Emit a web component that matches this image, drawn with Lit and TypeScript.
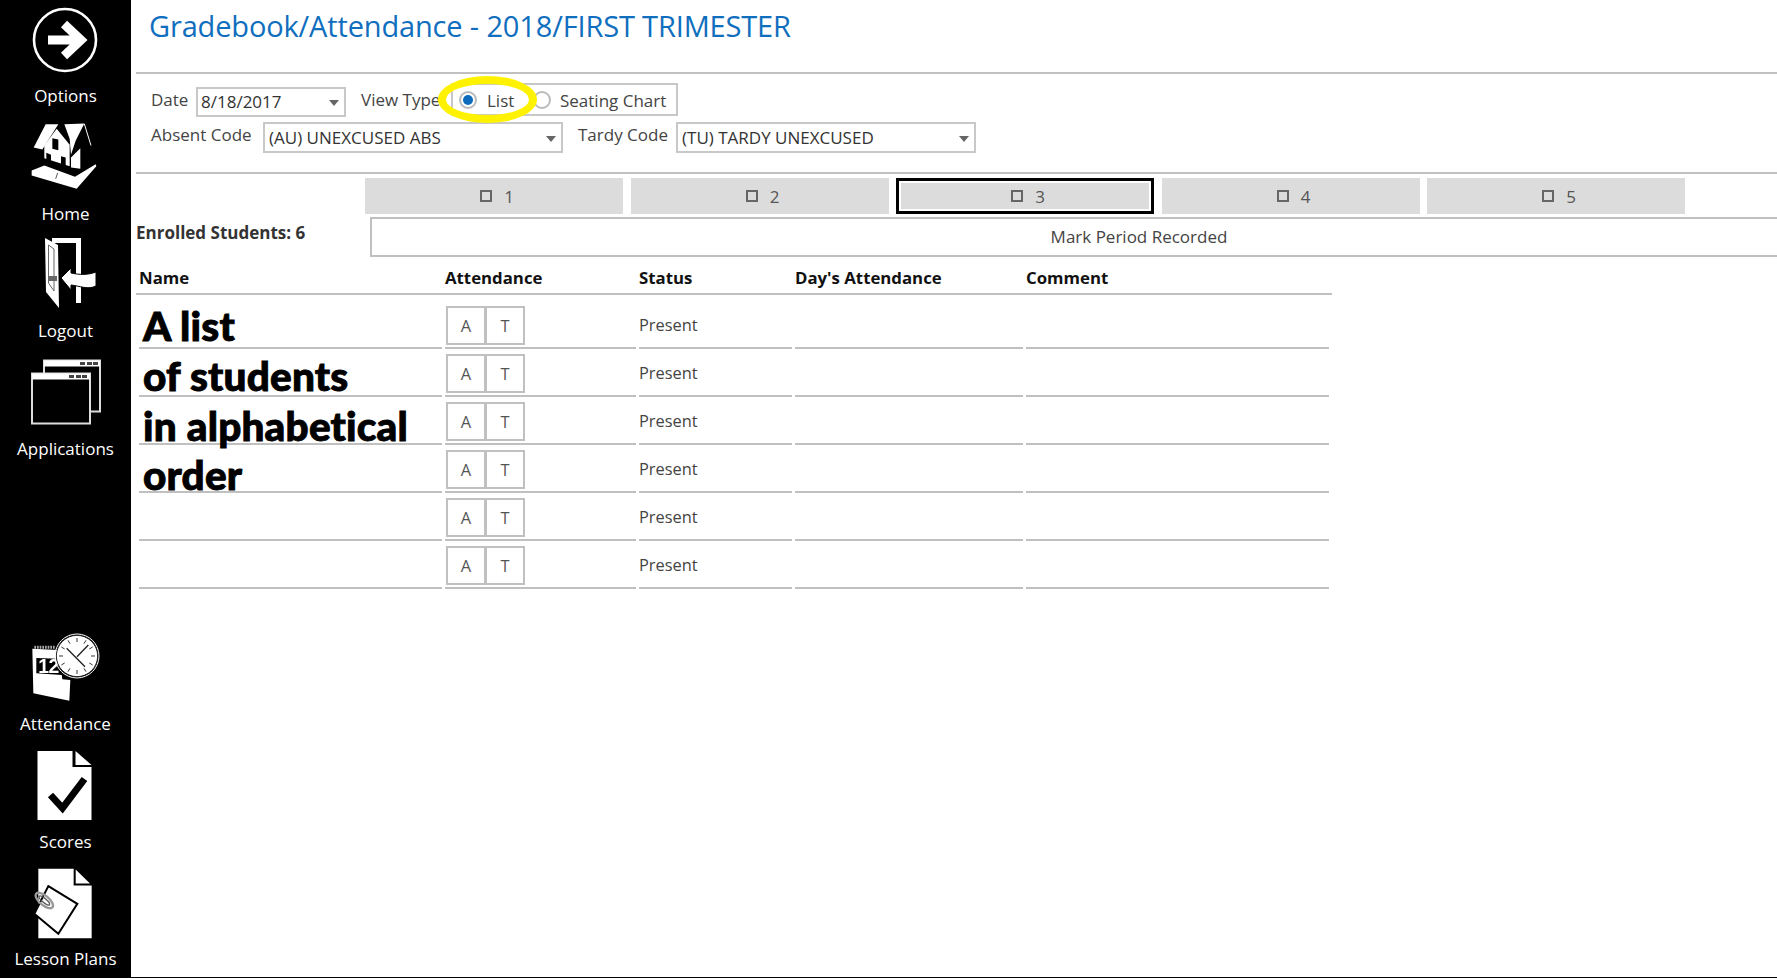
import { LitElement, html, css, svg } from "lit";
import { customElement } from "lit/decorators.js";

const icons: Record<string, unknown> = {
  options: svg`<circle cx="65" cy="40" r="31" fill="none" stroke="#fff" stroke-width="2.6"/>
    <path d="M48 40H81M64 24L81 40L64 56" fill="none" stroke="#fff" stroke-width="9"/>`,
  home: svg`<g transform="translate(25,-2.5) scale(.3333)" fill="#fff">
    <polygon points="62,26 100,26 52,102 26,96"/>
    <polygon points="95,40 134,88 134,152 58,128 58,90"/>
    <polygon points="82,68 100,72 100,104 82,100" fill="#000"/>
    <polygon points="64,112 78,118 78,145 64,140" fill="#000"/>
    <polygon points="108,122 122,126 122,150 108,146" fill="#000"/>
    <polygon points="118,26 178,24 152,76 138,118 134,70"/>
    <path d="M178 25L198 90" stroke="#fff" stroke-width="3"/>
    <polygon points="138,126 166,98 166,160 138,156"/>
    <polygon points="20,165 58,150 150,184 212,146 214,152 155,220 20,180"/>
    <path d="M98 172L92 190" stroke="#000" stroke-width="2"/></g>`,
  logout: svg`<g fill="#fff">
    <path d="M47 3H81V68H76V8H52V3Z"/>
    <polygon points="45,3 58,10 59,73 46,57"/>
    <polygon points="48.5,10 54,14 54,56 48.5,48" fill="none" stroke="#666" stroke-width="1"/>
    <rect x="49" y="41" width="8" height="5" fill="#666"/>
    <path d="M61 43L71 33V38C80 40 88 40 96 37V51C88 55 80 51 71 50V55Z" stroke="#000" stroke-width="1"/></g>`,
  apps: svg`<g>
    <rect x="44" y="7.5" width="56" height="51" fill="none" stroke="#ddd" stroke-width="2"/>
    <rect x="44" y="7.5" width="56" height="6" fill="#fff"/>
    <rect x="32" y="20.5" width="58" height="50" fill="#000" stroke="#ddd" stroke-width="2"/>
    <rect x="32" y="20.5" width="58" height="6" fill="#fff"/>
    <path d="M80 10.5h5M87 10.5h5M93 10.5h5M69 23.5h5M76 23.5h5M82 23.5h5" stroke="#444" stroke-width="3"/></g>`,
  attendance: svg`<g transform="translate(25,2) scale(.3333)">
    <polygon points="22,56 100,60 112,148 136,150 133,212 25,190" fill="#fff"/>
    <path d="M28 52H92" stroke="#aaa" stroke-width="9" stroke-dasharray="5 3"/>
    <polygon points="34,84 100,86 122,136 34,130" fill="#000"/>
    <text x="40" y="128" font-family="Liberation Sans, sans-serif" font-weight="700" font-size="58" fill="#fff" letter-spacing="-2">12</text>
    <circle cx="156" cy="78" r="62" fill="#fff" stroke="#222" stroke-width="3"/>
    <circle cx="156" cy="78" r="66" fill="none" stroke="#fff" stroke-width="3"/>
    <path d="M156 24v12M156 120v12M102 78h12M198 78h12M129 31l6 10M183 125l-6-10M109 51l10 6M203 105l-10-6M183 31l-6 10M129 125l6-10M203 51l-10 6M109 105l10-6" stroke="#333" stroke-width="3"/>
    <path d="M125 55L180 110M156 80L190 45" stroke="#222" stroke-width="4"/></g>`,
  scores: svg`<g transform="translate(-1.5,5)">
    <polygon points="39,0 74,0 74,16 93,16 93,69 39,69" fill="#fff"/>
    <polygon points="77,0 93,14 77,14" fill="#fff"/>
    <path d="M52 44L64 57L86 28" fill="none" stroke="#000" stroke-width="7"/></g>`,
  lesson: svg`<g transform="translate(25,2.5) scale(.3333)">
    <polygon points="40,10 146,10 146,60 200,60 200,218 40,218" fill="#fff"/>
    <polygon points="152,12 195,54 152,54" fill="#fff"/>
    <polygon points="70,62 157,115 100,205 28,145" fill="#fff" stroke="#000" stroke-width="6"/>
    <ellipse cx="58" cy="105" rx="32" ry="14" transform="rotate(40 58 105)" fill="none" stroke="#999" stroke-width="7"/>
    <ellipse cx="58" cy="105" rx="20" ry="6" transform="rotate(40 58 105)" fill="none" stroke="#555" stroke-width="4"/></g>`,
};

const top = [
  ["options", "Options"],
  ["home", "Home"],
  ["logout", "Logout"],
  ["apps", "Applications"],
];
const bottom = [
  ["attendance", "Attendance"],
  ["scores", "Scores"],
  ["lesson", "Lesson Plans"],
];
const columns = ["Name", "Attendance", "Status", "Day's Attendance", "Comment"];

@customElement("app-root")
export class AppRoot extends LitElement {
  static styles = css`
    :host {
      display: flex;
      width: 1777px;
      height: 978px;
      overflow: hidden;
      box-sizing: border-box;
      border-bottom: 1px solid #000;
      font-family: "Open Sans", "Noto Sans", sans-serif;
      font-size: 17px;
      color: #444;
      background: #fff;
    }
    .side {
      width: 131px;
      flex: none;
      background: #000;
      color: #fff;
      display: flex;
      flex-direction: column;
      overflow: hidden;
    }
    .bottom-group { margin-top: 158px; }
    .item { height: 117.5px; display: flex; flex-direction: column; align-items: center; }
    .item svg { display: block; width: 131px; height: 84px; flex: none; filter: blur(0.35px); }
    .item span { line-height: 24px; font-size: 17px; white-space: nowrap; }

    .main { flex: 1; min-width: 0; position: relative; overflow: hidden; }
    .title {
      height: 72px;
      padding-left: 18px;
      box-sizing: border-box;
      font-size: 29px;
      line-height: 52px;
      color: #106ebe;
      white-space: nowrap;
      letter-spacing: -0.15px;
    }
    .rule { height: 2px; background: #c0c0c0; margin-left: 5px; }

    .filters { height: 98px; padding: 9px 0 0 20px; box-sizing: border-box; position: relative; }
    .frow { display: flex; align-items: flex-start; }
    .frow.second { margin-top: 5px; }
    .lab { flex: none; white-space: nowrap; line-height: 24px; }
    .l-date { width: 45px; margin-top: 5px; }
    .l-view { width: 90px; margin: 5px 0 0 15px; }
    .l-abs { width: 112px; margin-top: 1px; }
    .l-tardy { width: 98px; margin: 1px 0 0 15px; }
    .box {
      flex: none;
      box-sizing: border-box;
      border: 2px solid #c8c8c8;
      padding-left: 3px;
      display: flex;
      align-items: center;
      justify-content: space-between;
      color: #333;
      white-space: nowrap;
    }
    .box i {
      width: 0; height: 0;
      border: 5px solid transparent;
      border-top: 6px solid #666;
      border-bottom: 0;
      margin: 2px 5px 0 0;
    }
    .b-date { width: 150px; height: 30px; margin-top: 4px; padding-bottom: 1px; }
    .b-sel { width: 300px; height: 31px; padding-left: 4px; }
    .group {
      width: 227px;
      height: 33px;
      box-sizing: border-box;
      border: 2px solid #c8c8c8;
      padding-top: 1px;
      display: flex;
      align-items: center;
      flex: none;
    }
    .radio {
      width: 18px; height: 18px;
      border-radius: 50%;
      box-sizing: border-box;
      border: 2px solid #bbb;
      background: #fff;
      display: grid;
      place-items: center;
      flex: none;
    }
    .radio b { width: 10px; height: 10px; border-radius: 50%; background: #0f6cbd; }
    .r1 { margin-left: 6px; }
    .t1 { margin-left: 10px; width: 46px; }
    .r2 { margin-left: 0; }
    .t2 { margin-left: 9px; white-space: nowrap; }
    .ring {
      position: absolute;
      left: 307px;
      top: 2px;
      width: 99px;
      height: 47px;
      box-sizing: border-box;
      border: 8px solid #fff200;
      border-radius: 50%;
    }

    .tabs { display: flex; gap: 7.5px; margin: 4px 0 0 234px; }
    .tab {
      width: 258px;
      height: 36px;
      box-sizing: border-box;
      padding-left: 6px;
      background: #dcdcdc;
      display: flex;
      align-items: center;
      justify-content: center;
      gap: 12px;
      color: #555;
    }
    .tab.on { border: 3px solid #000; box-shadow: inset 0 0 0 2px #fff; }
    .check { width: 12px; height: 12px; box-sizing: border-box; border: 2px solid #666; }

    .enrolled { display: flex; height: 40px; margin-top: 3px; }
    .count {
      width: 234px;
      margin-left: 5px;
      flex: none;
      font-weight: 700;
      color: #333;
      line-height: 32px;
      white-space: nowrap;
    }
    .mark {
      width: 1538px;
      flex: none;
      box-sizing: border-box;
      border: 2px solid #c0c0c0;
      padding-bottom: 2px;
      display: flex;
      align-items: center;
      justify-content: center;
      color: #444;
    }

    .table { margin-left: 8px; width: 1193px; }
    .grid { display: grid; grid-template-columns: 303px 191px 153px 228px 303px; column-gap: 3px; }
    .head { height: 38px; box-sizing: border-box; padding-top: 9px; border-bottom: 2px solid #c0c0c0; margin: 0 0 6px -3px; padding-left: 3px; width: 1196px; }
    .head div { font-weight: 700; color: #111; line-height: 24px; white-space: nowrap; font-size: 16.8px; }
    .row { height: 48px; }
    .cell { box-sizing: border-box; height: 48px; border-bottom: 2px solid #c0c0c0; display: flex; align-items: center; font-size: 16.4px; }
    .ab { display: flex; align-self: flex-start; margin: 5px 0 0 1px; }
    .ab span {
      width: 40px; height: 39px;
      box-sizing: border-box;
      border: 2px solid #c0c0c0;
      display: grid;
      place-items: center;
      color: #555;
    }
    .ab span + span { margin-left: -1px; }

    .note {
      position: absolute;
      left: 12px;
      top: 301px;
      font-family: Lato, "Open Sans", sans-serif;
      font-weight: 900;
      font-size: 40.5px;
      line-height: 49.8px;
      letter-spacing: 0.2px;
      color: #000;
      white-space: nowrap;
      -webkit-text-stroke: 0.9px #000;
    }
  `;

  private item(i: string[]) {
    return html`<div class="item">
      <svg viewBox="0 0 131 84">${icons[i[0]]}</svg>
      <span>${i[1]}</span>
    </div>`;
  }

  render() {
    return html`
      <nav class="side">
        <div>${top.map((i) => this.item(i))}</div>
        <div class="bottom-group">${bottom.map((i) => this.item(i))}</div>
      </nav>
      <main class="main">
        <div class="title">Gradebook/Attendance - 2018/FIRST TRIMESTER</div>
        <div class="rule"></div>
        <section class="filters">
          <div class="frow">
            <span class="lab l-date">Date</span>
            <div class="box b-date">8/18/2017<i></i></div>
            <span class="lab l-view">View Type</span>
            <div class="group">
              <span class="radio r1"><b></b></span><span class="t1">List</span>
              <span class="radio r2"></span><span class="t2">Seating Chart</span>
            </div>
          </div>
          <div class="frow second">
            <span class="lab l-abs">Absent Code</span>
            <div class="box b-sel">(AU) UNEXCUSED ABS<i></i></div>
            <span class="lab l-tardy">Tardy Code</span>
            <div class="box b-sel">(TU) TARDY UNEXCUSED<i></i></div>
          </div>
          <div class="ring"></div>
        </section>
        <div class="rule"></div>
        <div class="tabs">
          ${[1, 2, 3, 4, 5].map(
            (n) => html`<div class="tab ${n === 3 ? "on" : ""}"><span class="check"></span>${n}</div>`
          )}
        </div>
        <div class="enrolled">
          <div class="count">Enrolled Students: 6</div>
          <div class="mark">Mark Period Recorded</div>
        </div>
        <div class="table">
          <div class="grid head">${columns.map((c) => html`<div>${c}</div>`)}</div>
          ${[0, 1, 2, 3, 4, 5].map(
            () => html`<div class="grid row">
              <div class="cell"></div>
              <div class="cell"><div class="ab"><span>A</span><span>T</span></div></div>
              <div class="cell">Present</div>
              <div class="cell"></div>
              <div class="cell"></div>
            </div>`
          )}
        </div>
        <div class="note">A list<br />of students<br />in alphabetical<br />order</div>
      </main>
    `;
  }
}
